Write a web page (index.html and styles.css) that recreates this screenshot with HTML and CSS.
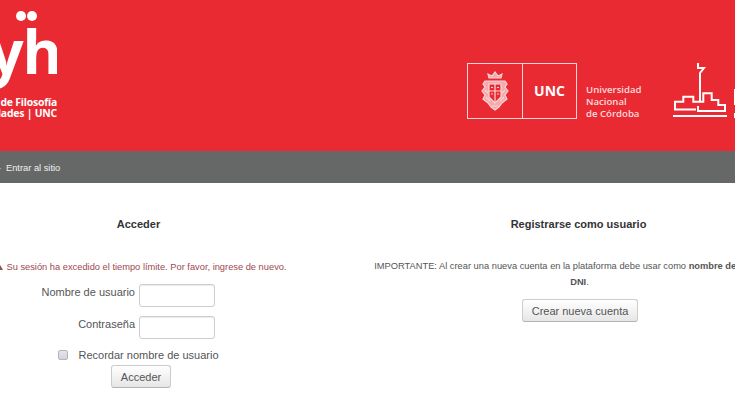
FILE: index.html
```html
<!DOCTYPE html>
<html lang="es">
<head>
    <meta charset="UTF-8">
    <meta name="viewport" content="width=device-width, initial-scale=1.0">
    <title>Acceder al sitio</title>
    <link rel="stylesheet" href="styles.css">
</head>
<body>
    <div class="page">
        <header class="banner">
            <div class="ffyh">
                <div class="ffyh-mark">yh<span class="dot dot-left"></span><span class="dot dot-right"></span></div>
                <div class="ffyh-name">de Filosofía</div>
                <div class="ffyh-name">idades | UNC</div>
            </div>
            <div class="unc">
                <div class="unc-box">
                    <div class="unc-shield">
                        <svg width="30" height="42" viewBox="0 0 30 42" fill="none" stroke="#f8d5d6" stroke-width="1.2">
                            <path d="M9 8 L8 4 L12 6 L15 2 L18 6 L22 4 L21 8 Z" fill="#f4a9ac"/>
                            <path d="M5 11 H25 L27 14 L25 17 L28 21 L25 25 L27 29 L22 33 L19 37 L15 40 L11 37 L8 33 L3 29 L5 25 L2 21 L5 17 L3 14 Z" fill="#f4a9ac"/>
                            <path d="M9 14 H21 V27 L15 33 L9 27 Z" fill="#ea2a33"/>
                            <path d="M9 21 H21 M15 14 V32 M11 17.5 H13 M17 17.5 H19 M11 24 H13 M17 24 H19"/>
                            <path d="M5 20 L8 23 M25 20 L22 23 M6 27 L10 31 M24 27 L20 31 M12 36 L18 36"/>
                        </svg>
                    </div>
                    <div class="unc-label">UNC</div>
                </div>
                <div class="unc-name">Universidad<br>Nacional<br>de Córdoba</div>
            </div>
            <div class="skyline">
                <svg width="56" height="56" viewBox="0 0 56 56" fill="none" stroke="#fff" stroke-width="2">
                    <path d="M26 1 V6 H32 L28 11 V39.7 H31.3 V31.3 H39.7 V38 H46.3 V43 H53 V49 H26 V44"/>
                    <path d="M28 39.7 H21.3 V34.7 H11.3 V39.7 H3 V47.5 H24"/>
                    <path d="M1 54 H55"/>
                </svg>
            </div>
            <div class="skyline-cut"><span></span><span></span></div>
        </header>
        <nav class="navbar"><span class="nav-sep">-</span>Entrar al sitio</nav>
        <main class="columns">
            <section class="box">
                <h2 class="login-title">Acceder</h2>
                <p class="error">
                    <svg class="error-icon" width="9" height="8" viewBox="0 0 9 8"><path d="M4.5 0 L9 8 H0 Z" fill="#8a5a50"/></svg>Su sesión ha excedido el tiempo límite. Por favor, ingrese de nuevo.
                </p>
                <form class="login">
                    <div class="form-row">
                        <label for="username">Nombre de usuario</label>
                        <input type="text" id="username">
                    </div>
                    <div class="form-row">
                        <label for="password">Contraseña</label>
                        <input type="password" id="password">
                    </div>
                    <div class="remember">
                        <input type="checkbox" id="rememberusername">
                        <label for="rememberusername">Recordar nombre de usuario</label>
                    </div>
                    <div class="actions"><button type="button" class="btn">Acceder</button></div>
                </form>
            </section>
            <section class="box">
                <h2>Registrarse como usuario</h2>
                <p class="notice">IMPORTANTE: Al crear una nueva cuenta en la plataforma debe usar como <b>nombre de usuario</b> su <b>DNI</b>.</p>
                <div class="actions"><button type="button" class="btn">Crear nueva cuenta</button></div>
            </section>
        </main>
    </div>
</body>
</html>
```

FILE: styles.css
```css
html, body {
    margin: 0;
    padding: 0;
    overflow: hidden;
    background-color: #fff;
}
body {
    width: 735px;
    height: 400px;
    font-family: "Liberation Sans", Arial, sans-serif;
    color: #555;
}
.page {
    width: 878px;
    margin-left: -80px;
}
.banner {
    display: flex;
    height: 151px;
    background-color: #ea2a33;
    color: #fff;
}
.ffyh {
    width: 137px;
    margin-right: 410px;
    flex-shrink: 0;
    text-align: right;
    font-family: "Open Sans", sans-serif;
    font-weight: 700;
    white-space: nowrap;
    overflow: hidden;
}
.ffyh-mark {
    position: relative;
    height: 97px;
    margin-right: -4px;
    font-size: 60px;
    line-height: 102px;
    letter-spacing: -1px;
}
.dot {
    position: absolute;
    top: 11px;
    width: 10px;
    height: 10px;
    border-radius: 50%;
    background-color: #fff;
}
.dot-left {
    right: 35px;
}
.dot-right {
    right: 24px;
}
.ffyh-name {
    font-size: 10.4px;
    line-height: 11px;
    letter-spacing: -0.2px;
}
.unc {
    display: flex;
    align-items: center;
    height: 56px;
    margin-top: 63px;
}
.unc-box {
    display: flex;
    width: 108px;
    height: 54px;
    border: 1px solid #f8d5d6;
}
.unc-shield {
    display: flex;
    align-items: center;
    justify-content: center;
    width: 54px;
    border-right: 1px solid #f8d5d6;
}
.unc-label {
    flex: 1;
    text-align: center;
    font-family: "Open Sans", sans-serif;
    font-size: 14px;
    font-weight: 700;
    line-height: 54px;
}
.unc-name {
    width: 58px;
    margin-left: 9px;
    margin-top: 21px;
    font-family: "Open Sans", sans-serif;
    font-size: 9.6px;
    font-weight: 600;
    line-height: 12px;
    white-space: nowrap;
    color: #fbdcdd;
}
.skyline {
    margin-left: 28px;
    margin-top: 62px;
}
.skyline-cut {
    margin-left: 6px;
    margin-top: 89px;
}
.skyline-cut span {
    display: block;
    width: 6px;
    height: 16px;
    margin-bottom: 8px;
    background-color: #fff;
}
.skyline-cut span + span {
    height: 5px;
}
.navbar {
    height: 32px;
    padding-left: 78px;
    background-color: #666868;
    color: #f0f0f0;
    font-size: 9.3px;
    line-height: 34px;
}
.nav-sep {
    display: inline-block;
    width: 8px;
    color: #ccc;
}
.columns {
    display: grid;
    grid-template-columns: 439px 439px;
}
.box {
    text-align: center;
    padding-top: 34px;
}
h2 {
    margin: 0;
    font-size: 11px;
    line-height: 14px;
    color: #333;
}
.login-title {
    padding-right: 2px;
}
.error {
    margin: 29px 0 0;
    padding-left: 2px;
    font-size: 9.3px;
    line-height: 14px;
    color: #a0484f;
    white-space: nowrap;
}
.error-icon {
    margin-right: 3px;
}
.notice {
    margin: 27px 0 0;
    padding: 0 8px 0 10px;
    font-size: 9.3px;
    line-height: 16px;
}
.login {
    padding-top: 1px;
    padding-right: 5px;
}
.form-row {
    display: grid;
    grid-template-columns: 1fr 1fr;
    column-gap: 4px;
    align-items: start;
    margin-top: 9px;
    font-size: 11px;
}
.form-row label {
    text-align: right;
    line-height: 16px;
}
.form-row input {
    width: 76px;
    height: 23px;
    box-sizing: border-box;
    border: 1px solid #ccc;
    border-radius: 3px;
    box-shadow: inset 0 1px 1px rgba(0, 0, 0, 0.08);
}
.remember {
    display: flex;
    justify-content: center;
    align-items: center;
    margin: 8px 0 0 3px;
    height: 16px;
    font-size: 11px;
}
.remember input {
    appearance: none;
    width: 10px;
    height: 10px;
    margin: 0 10px 0 0;
    border: 1px solid #b5b5bd;
    border-radius: 2px;
    background: linear-gradient(#e4e4ea, #d4d4dc);
}
.actions {
    text-align: center;
}
.login .actions {
    margin: 2px 0 0 8px;
}
.btn {
    height: 23px;
    padding: 0 9px;
    border: 1px solid #ccc;
    border-bottom-color: #b3b3b3;
    border-radius: 3px;
    background: linear-gradient(#fff, #e6e6e6);
    color: #555;
    font-family: "Liberation Sans", Arial, sans-serif;
    font-size: 11px;
}
.box > .actions {
    margin: 9px 0 0 3px;
}
```
